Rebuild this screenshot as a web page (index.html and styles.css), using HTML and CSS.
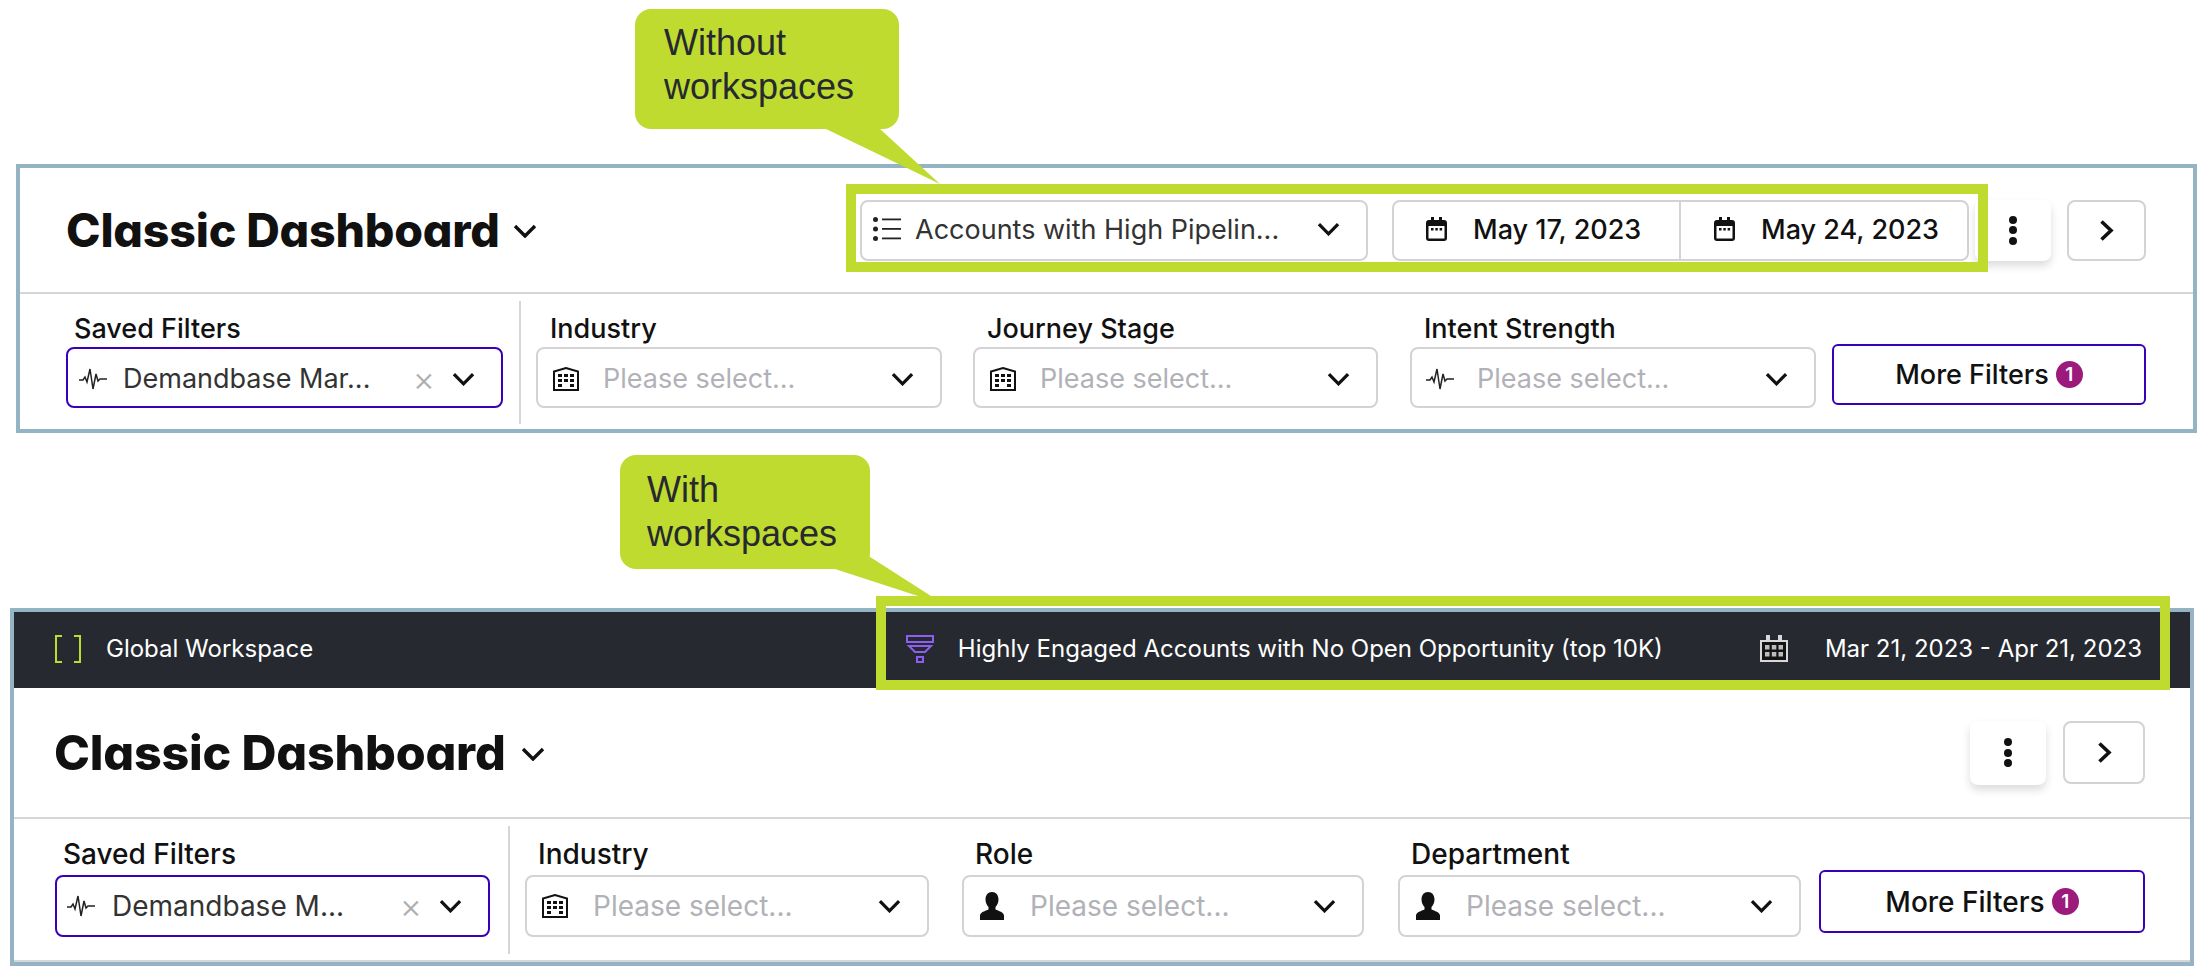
FILE: index.html
```html
<!DOCTYPE html>
<html lang="en">
<head>
<meta charset="utf-8">
<title>Classic Dashboard</title>
<link rel="stylesheet" href="styles.css">
</head>
<body>
<svg class="sprite" aria-hidden="true">
  <symbol id="i-chev" viewBox="0 0 24 14"><path d="M2 2l10 10L22 2" fill="none" stroke="currentColor" stroke-width="3.4"/></symbol>
  <symbol id="i-right" viewBox="0 0 15 23"><path d="M2.500 2.500L12 11.500l-9.500 9" fill="none" stroke="currentColor" stroke-width="3.600"/></symbol>
  <symbol id="i-list" viewBox="0 0 28 24"><g fill="#222"><circle cx="2.5" cy="2.5" r="2.5"/><circle cx="2.5" cy="12" r="2.5"/><circle cx="2.5" cy="21.5" r="2.5"/><rect x="9" y="1.5" width="19" height="1.8"/><rect x="9" y="11" width="19" height="1.8"/><rect x="9" y="20.5" width="19" height="1.8"/></g></symbol>
  <symbol id="i-wave" viewBox="0 0 28 24"><path d="M0 13h4l2-3 2 5 3-13 3 20 3-15 2 7 2-2h7" fill="none" stroke="#222" stroke-width="1.5"/></symbol>
  <symbol id="i-building" viewBox="0 0 26 24"><path d="M1 23V4.500L13 1l12 3.500V23z" fill="#fff" stroke="#111" stroke-width="2"/><g fill="#111"><rect x="5" y="7" width="4" height="3"/><rect x="11" y="7" width="4" height="3"/><rect x="17" y="7" width="4" height="3"/><rect x="5" y="12" width="4" height="3"/><rect x="11" y="12" width="4" height="3"/><rect x="17" y="12" width="4" height="3"/><rect x="5" y="17" width="4" height="3"/><rect x="17" y="17" width="4" height="3"/><rect y="22" width="26" height="2"/></g></symbol>
  <symbol id="i-person" viewBox="0 0 24 28"><path d="M12 0c4 0 6.500 3 6.500 7.500 0 3.200-1.300 5.800-3 7.500v2.500c3 1.200 8.500 3 8.500 6V28H0v-4.500c0-3 5.500-4.800 8.500-6V15c-1.700-1.700-3-4.300-3-7.500C5.500 3 8 0 12 0z" fill="#111"/></symbol>
  <symbol id="i-date" viewBox="0 0 21 24"><path d="M5 0h3v3h5V0h3v3h2a3 3 0 0 1 3 3v15a3 3 0 0 1-3 3H3a3 3 0 0 1-3-3V6a3 3 0 0 1 3-3h2z" fill="#111"/><rect x="2.500" y="9" width="16" height="12.500" fill="#fff"/><g fill="#111"><rect x="5" y="11" width="2.500" height="2.500"/><rect x="9.300" y="11" width="2.500" height="2.500"/><rect x="13.600" y="11" width="2.500" height="2.500"/></g></symbol>
  <symbol id="i-bracket" viewBox="0 0 26 28"><path d="M7 1H1v26h6M19 1h6v26h-6" fill="none" stroke="#bfdb30" stroke-width="2"/></symbol>
  <symbol id="i-funnel" viewBox="0 0 28 28"><g fill="none" stroke="#8d5ff0" stroke-width="2"><rect x="1" y="1" width="26" height="6"/><path d="M3 11h22l-6 6H9z"/><rect x="11" y="22" width="6" height="5"/></g></symbol>
  <symbol id="i-cal" viewBox="0 0 28 27"><g fill="#d8d8d8"><rect x="6" y="0" width="4" height="7"/><rect x="18" y="0" width="4" height="7"/></g><rect x="1" y="6" width="26" height="20" fill="#141414" stroke="#d8d8d8" stroke-width="2"/><g fill="#bcbcbc"><rect x="5" y="10" width="4.500" height="4.500"/><rect x="11.800" y="10" width="4.500" height="4.500"/><rect x="18.500" y="10" width="4.500" height="4.500"/><rect x="5" y="17" width="4.500" height="4.500"/><rect x="11.800" y="17" width="4.500" height="4.500"/><rect x="18.500" y="17" width="4.500" height="4.500"/></g></symbol>
</svg>

<main class="stage">
  <section class="panel panel-a">
    <header class="head">
      <h1 class="title">Classic Dashboard</h1>
      <svg class="title-chev"><use href="#i-chev"/></svg>
      <div class="tools">
        <div class="select select-accounts">
          <svg class="ico ico-list"><use href="#i-list"/></svg>
          <span class="value">Accounts with High Pipelin...</span>
          <svg class="chev"><use href="#i-chev"/></svg>
        </div>
        <div class="dates">
          <div class="date date-from"><svg class="ico-date"><use href="#i-date"/></svg><span>May 17, 2023</span></div>
          <div class="date date-to"><svg class="ico-date"><use href="#i-date"/></svg><span>May 24, 2023</span></div>
        </div>
        <button class="kebab"><i></i><i></i><i></i></button>
        <button class="next"><svg class="next-ico"><use href="#i-right"/></svg></button>
      </div>
    </header>
    <div class="filters">
      <div class="field field-saved">
        <label class="label">Saved Filters</label>
        <div class="select select-active">
          <svg class="ico"><use href="#i-wave"/></svg>
          <span class="value">Demandbase Mar...</span>
          <span class="clear">×</span>
          <svg class="chev"><use href="#i-chev"/></svg>
        </div>
      </div>
      <div class="vline"></div>
      <div class="field field-a">
        <label class="label">Industry</label>
        <div class="select">
          <span class="slot"><svg class="ico"><use href="#i-building"/></svg></span>
          <span class="placeholder">Please select...</span>
          <svg class="chev"><use href="#i-chev"/></svg>
        </div>
      </div>
      <div class="field field-b">
        <label class="label">Journey Stage</label>
        <div class="select">
          <span class="slot"><svg class="ico"><use href="#i-building"/></svg></span>
          <span class="placeholder">Please select...</span>
          <svg class="chev"><use href="#i-chev"/></svg>
        </div>
      </div>
      <div class="field field-c">
        <label class="label">Intent Strength</label>
        <div class="select">
          <span class="slot"><svg class="ico"><use href="#i-wave"/></svg></span>
          <span class="placeholder">Please select...</span>
          <svg class="chev"><use href="#i-chev"/></svg>
        </div>
      </div>
      <button class="more">More Filters <b class="badge">1</b></button>
    </div>
  </section>

  <section class="panel panel-b">
    <div class="bar">
      <div class="bar-group">
        <svg class="ico-bracket"><use href="#i-bracket"/></svg>
        <span>Global Workspace</span>
      </div>
      <div class="bar-group bar-right">
        <svg class="ico-funnel"><use href="#i-funnel"/></svg>
        <span class="bar-list">Highly Engaged Accounts with No Open Opportunity (top 10K)</span>
        <svg class="ico-cal"><use href="#i-cal"/></svg>
        <span>Mar 21, 2023 - Apr 21, 2023</span>
      </div>
    </div>
    <header class="head">
      <h1 class="title">Classic Dashboard</h1>
      <svg class="title-chev"><use href="#i-chev"/></svg>
      <div class="tools">
        <button class="kebab"><i></i><i></i><i></i></button>
        <button class="next"><svg class="next-ico"><use href="#i-right"/></svg></button>
      </div>
    </header>
    <div class="filters">
      <div class="field field-saved">
        <label class="label">Saved Filters</label>
        <div class="select select-active">
          <svg class="ico"><use href="#i-wave"/></svg>
          <span class="value">Demandbase M...</span>
          <span class="clear">×</span>
          <svg class="chev"><use href="#i-chev"/></svg>
        </div>
      </div>
      <div class="vline"></div>
      <div class="field field-a">
        <label class="label">Industry</label>
        <div class="select">
          <span class="slot"><svg class="ico"><use href="#i-building"/></svg></span>
          <span class="placeholder">Please select...</span>
          <svg class="chev"><use href="#i-chev"/></svg>
        </div>
      </div>
      <div class="field field-b">
        <label class="label">Role</label>
        <div class="select">
          <span class="slot"><svg class="ico ico-person"><use href="#i-person"/></svg></span>
          <span class="placeholder">Please select...</span>
          <svg class="chev"><use href="#i-chev"/></svg>
        </div>
      </div>
      <div class="field field-c">
        <label class="label">Department</label>
        <div class="select">
          <span class="slot"><svg class="ico ico-person"><use href="#i-person"/></svg></span>
          <span class="placeholder">Please select...</span>
          <svg class="chev"><use href="#i-chev"/></svg>
        </div>
      </div>
      <button class="more">More Filters <b class="badge">1</b></button>
    </div>
  </section>

  <div class="callout callout-a">Without<br>workspaces</div>
  <div class="callout callout-b">With<br>workspaces</div>
  <div class="mark mark-a"></div>
  <div class="mark mark-b"></div>
</main>
</body>
</html>
```
FILE: styles.css
```css
* { box-sizing: border-box; }
html, body { margin: 0; padding: 0; background: #fff; }
body { font-family: "Inter", "Liberation Sans", sans-serif; color: #111; overflow: hidden; }
.sprite { display: none; }
.stage { position: relative; width: 2206px; height: 976px; padding-top: 164px; }

/* panels */
.panel { border: 4px solid #95b4c3; background: #fff; display: flex; flex-direction: column; }
.panel-a { margin-left: 16px; width: 2181px; height: 269px; }
.panel-b { margin-left: 10px; margin-top: 175px; width: 2184px; height: 358px; }

.head { display: flex; align-items: center; border-bottom: 2px solid #d6d6d8; flex: none; }
.panel-a .head { height: 126px; padding: 0 47px 0 46px; }
.panel-b .head { height: 131px; padding: 0 45px 0 40px; }
.title { margin: 0; font-weight: 800; font-feature-settings: "cv11"; color: #111; white-space: nowrap; }
.panel-a .title { font-size: 46.500px; letter-spacing: -0.2px; }
.panel-b .title { font-size: 48.400px; letter-spacing: -0.2px; }
.title-chev { width: 24px; height: 14px; margin-left: 13px; margin-top: 2px; color: #111; flex: none; }
.panel-b .title-chev { margin-left: 15px; }
.tools { margin-left: auto; display: flex; align-items: center; }

/* selects */
.select { display: flex; align-items: center; height: 61px; border: 2px solid #d3d3d6; border-radius: 8px; background: #fff; padding: 0 26px 0 14px; font-size: 27px; }
.panel-a .filters .select { padding-top: 2px; }
.select-accounts { width: 508px; padding-left: 11px; padding-bottom: 2px; margin-right: 24px; }
.select-active { border-color: #3a00b8; padding-left: 10px; }
.panel-b .select { height: 62px; font-size: 28px; }
.panel-a .select-active { padding-left: 11px; }
.ico { width: 28px; height: 24px; flex: none; }
.ico-list { margin-right: 14px; }
.select-active .ico { margin-right: 16px; }
.panel-b .select-active .ico { margin-right: 17px; }
.slot { width: 28px; height: 28px; margin-right: 23px; display: flex; align-items: center; flex: none; }
.panel-b .slot { margin-right: 24px; }
.ico-person { width: 24px; height: 28px; margin-left: 2px; }
.value { color: #333; white-space: nowrap; }
.placeholder { color: #b1b1b8; white-space: nowrap; }
.chev { width: 23px; height: 14px; margin-left: auto; color: #111; flex: none; }
.clear { margin-left: auto; color: #aeaeae; font-size: 34px; line-height: 1; font-weight: 300; }
.clear + .chev { margin-left: 17px; }

/* dates */
.dates { display: flex; width: 577px; height: 61px; border: 2px solid #d3d3d6; border-radius: 8px; margin-right: 6px; }
.date { display: flex; align-items: center; gap: 26px; font-size: 27px; font-weight: 500; color: #111; flex: 1; padding-bottom: 2px; }
.date-from { padding-left: 32px; border-right: 2px solid #d3d3d6; }
.date-to { padding-left: 33px; }
.ico-date { width: 21px; height: 24px; flex: none; }

/* buttons */
.kebab { width: 76px; height: 61px; border: 0; border-radius: 8px; background: #fff; box-shadow: 0 5px 9px rgba(0,0,0,.14); margin-right: 16px; display: flex; flex-direction: column; align-items: center; justify-content: center; gap: 2.500px; padding: 0; }
.kebab i { width: 8px; height: 8px; border-radius: 50%; background: #111; display: block; }
.next { width: 79px; height: 61px; border: 2px solid #d3d3d6; border-radius: 8px; background: #fff; display: flex; align-items: center; justify-content: center; padding: 0; }
.next-ico { width: 15px; height: 23px; color: #111; }
.panel-b .kebab { height: 64px; margin-right: 17px; }
.panel-b .next { width: 82px; height: 63px; }

/* filter row */
.filters { display: flex; align-items: flex-start; flex: 1; }
.panel-a .filters { padding: 7px 0 0 46px; }
.panel-b .filters { padding: 7px 0 0 41px; border-bottom: 2px solid #d6d6d8; }
.field { display: flex; flex-direction: column; flex: none; }
.panel-a .field { padding-top: 12px; }
.panel-b .field { padding-top: 12px; }
.label { font-size: 27px; line-height: 32px; font-weight: 500; color: #111; margin-bottom: 2px; white-space: nowrap; padding-left: 14px; }
.panel-b .label { font-size: 28px; margin-bottom: 5px; padding-left: 13px; }
.field-saved .label, .panel-b .field-saved .label { padding-left: 8px; }
.panel-a .field-saved { width: 437px; }
.panel-a .field-a { width: 406px; margin-right: 31px; }
.panel-a .field-b { width: 405px; margin-right: 32px; }
.panel-a .field-c { width: 406px; margin-right: 16px; }
.panel-b .field-saved { width: 435px; }
.panel-b .field-a { width: 404px; margin-right: 33px; }
.panel-b .field-b { width: 402px; margin-right: 34px; }
.panel-b .field-c { width: 403px; margin-right: 18px; }
.vline { width: 2px; background: #d6d6d8; flex: none; margin: 0 15px 0 16px; }
.panel-a .vline { height: 123px; }
.panel-b .vline { height: 128px; margin: 0 15px 0 18px; }

.more { display: flex; align-items: center; justify-content: center; gap: 7px; border: 2px solid #3a00b8; border-radius: 6px; background: #fff; font-family: inherit; font-size: 27px; font-weight: 500; color: #111; padding: 0; flex: none; }
.panel-a .more { width: 314px; height: 61px; margin-top: 43px; }
.panel-b .more { width: 326px; height: 63px; margin-top: 44px; font-size: 28px; }
.badge { width: 27px; height: 27px; border-radius: 50%; background: #9c1a7c; color: #fff; font-size: 19px; font-weight: 600; display: flex; align-items: center; justify-content: center; }

/* dark bar */
.bar { height: 76px; background: #262a30; color: #fff; display: flex; align-items: center; justify-content: space-between; padding: 0 48px 3px 41px; font-size: 24px; flex: none; }
.bar-group { display: flex; align-items: center; white-space: nowrap; }
.ico-bracket { width: 26px; height: 28px; margin-right: 25px; }
.ico-funnel { width: 28px; height: 28px; margin-right: 24px; }
.bar-list { margin-right: 97px; }
.ico-cal { width: 28px; height: 27px; margin-right: 37px; }

/* annotations */
.callout { position: absolute; background: #bfdb30; color: #262a30; font-family: "Liberation Sans", Arial, sans-serif; font-size: 36px; line-height: 44px; border-radius: 16px; }
.callout::after { content: ""; position: absolute; background: #bfdb30; }
.callout-a { left: 635px; top: 9px; width: 264px; height: 120px; padding: 12px 0 0 29px; }
.callout-a::after { left: 191px; top: 119px; width: 114px; height: 56px; clip-path: polygon(0 2%, 54px 2%, 100% 100%); }
.callout-b { left: 620px; top: 455px; width: 250px; height: 114px; padding: 13px 0 0 27px; }
.callout-b::after { left: 215px; top: 100px; width: 96px; height: 41px; clip-path: polygon(0 14px, 0 0, 32px 0, 100% 100%, 83px 100%); }
.mark { position: absolute; border: 10px solid #bfdb30; }
.mark-a { left: 846px; top: 184px; width: 1142px; height: 88px; }
.mark-b { left: 876px; top: 596px; width: 1294px; height: 94px; }
```
